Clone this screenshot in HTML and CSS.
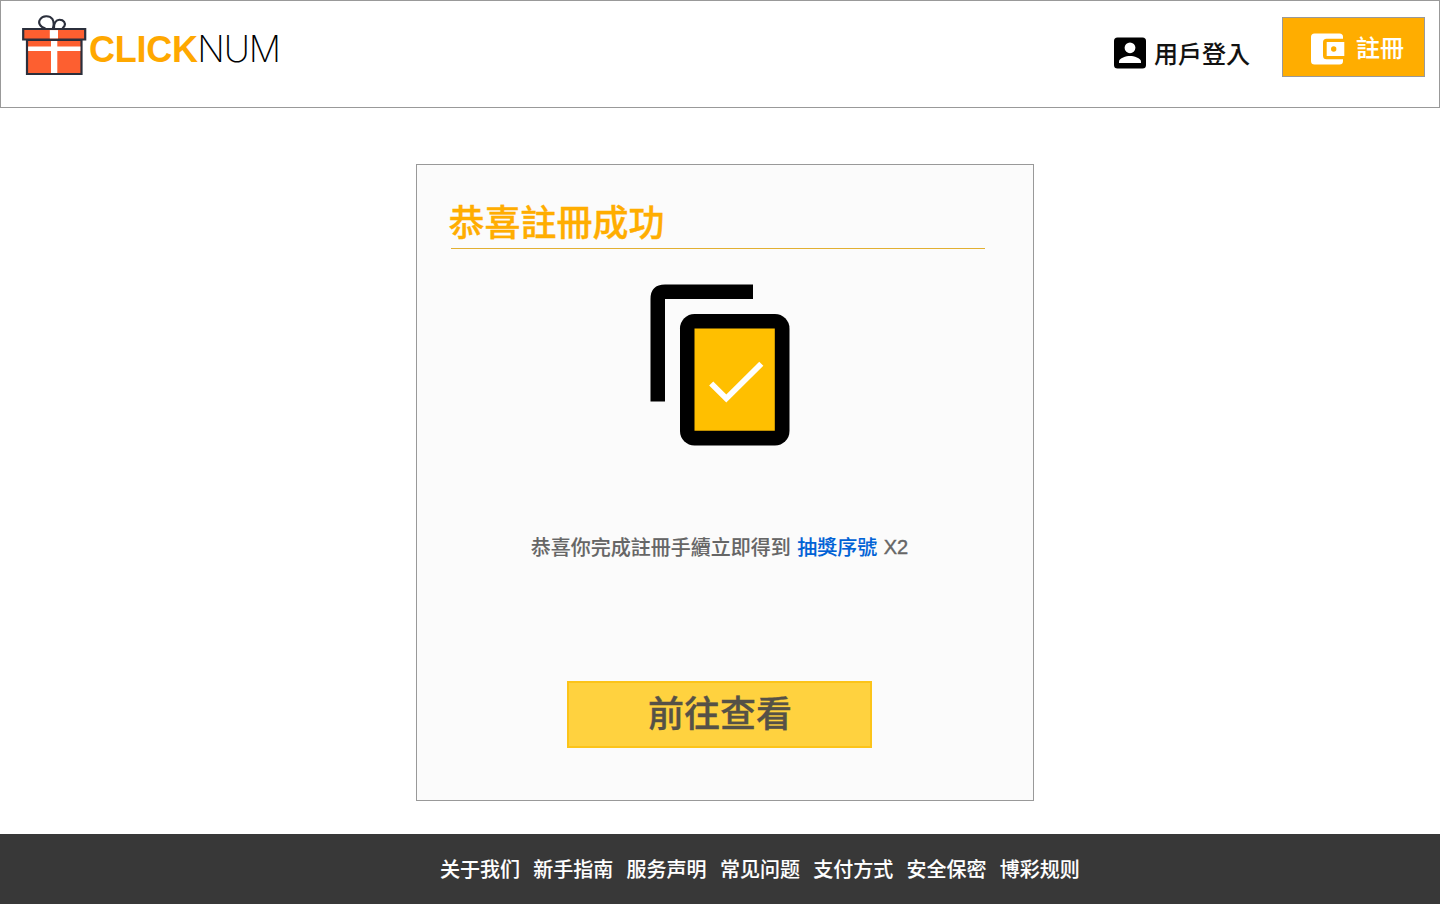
FILE: index.html
```html
<!DOCTYPE html>
<html lang="zh-Hant">
<head>
<meta charset="utf-8">
<title>CLICKNUM</title>
<link rel="stylesheet" href="styles.css">
</head>
<body>
<header class="header">
  <a class="logo">
    <svg class="logo-gift" width="66" height="64" viewBox="0.5 0 66 64">
      <g fill="none" stroke="#2b2f3c" stroke-width="2.1">
        <path d="M24 14.5C18 13 16.5 8.500 18.500 5.500C21 1.500 28 1 31 5.200C32.500 8 32.500 11 31.300 14.500"/>
        <path d="M32.500 14.500C32 9 34.500 5.800 38 5.800C42.500 5.800 44.300 9 43 12L41 14.500"/>
      </g>
      <path fill="#fd5f30" stroke="#2b2f3c" stroke-width="2.2" d="M5.500 26h54.500v34H5.500z"/>
      <path fill="#fff" d="M6.600 32.500h52.300v4.600H6.600zM29.500 27.100h6.300v31.800h-6.300z"/>
      <path fill="#fd5f30" stroke="#2b2f3c" stroke-width="2.200" d="M1.700 15h62v10.500h-62z"/>
      <path fill="#fff" d="M28.300 16.100h8.200v8.300h-8.200z"/>
    </svg>
    <span class="logo-click">CLICK</span><span class="logo-num">NUM</span>
  </a>
  <nav class="account">
    <a class="login">
      <svg width="32" height="32" viewBox="0 0 32 32">
        <rect y="0.500" width="32" height="31" rx="3.500"/>
        <circle cx="16" cy="10.800" r="5.400" fill="#fff"/>
        <path fill="#fff" d="M5 26v-1.500c0-3.600 7.300-5.600 11-5.600s11 2 11 5.600V26z"/>
      </svg>
      <span>用戶登入</span>
    </a>
    <a class="register">
      <svg width="36" height="32" viewBox="0 0 36 32">
        <rect x="1" y="0.500" width="32" height="31" rx="3.500" fill="#fff"/>
        <rect x="13" y="5.700" width="26" height="20.600" rx="3.500" fill="#ffad00"/>
        <rect x="16.700" y="9" width="17.600" height="14" fill="#fff"/>
        <circle cx="23.700" cy="16" r="2.700" fill="#ffad00"/>
      </svg>
      <span>註冊</span>
    </a>
  </nav>
</header>
<main class="card">
  <h1 class="title">恭喜註冊成功</h1>
  <svg class="success" width="140" height="162" viewBox="0 0 140 162">
    <path d="M0.500 117.500V15Q0.500 0.500 15 0.500H103V15H15V117.500z"/>
    <rect x="30" y="30" width="109.500" height="131.500" rx="14.500"/>
    <path fill="#ffbf00" d="M44.500 44.500h80.300v102.200H44.500z"/>
    <path fill="none" stroke="#fff" stroke-width="5.800" d="M61.200 99.500L76.300 114.500L111.300 79.700"/>
  </svg>
  <p class="message">恭喜你完成註冊手續立即得到<a class="prize">抽獎序號</a><span class="count">X2</span></p>
  <a class="view">前往查看</a>
</main>
<footer class="footer" lang="zh-Hans">
  <a>关于我们</a><a>新手指南</a><a>服务声明</a><a>常见问题</a><a>支付方式</a><a>安全保密</a><a>博彩规则</a>
</footer>
</body>
</html>
```
FILE: styles.css
```css
* { box-sizing: border-box; }
body {
  margin: 0;
  background: #fff;
  color: #111;
  font-family: "Noto Sans CJK TC", "Noto Sans CJK SC", sans-serif;
  font-weight: 500;
  -webkit-text-stroke: 0.1px;
}
.header {
  display: flex;
  justify-content: space-between;
  align-items: flex-start;
  height: 108px;
  padding: 13px 14px 0 21px;
  border: 1px solid #999;
}
.logo {
  display: flex;
  font-size: 36px;
  line-height: 40px;
  -webkit-text-stroke: 0;
}
.logo-gift { margin-right: 1px; }
.logo-click {
  margin-top: 16px;
  color: #ffa800;
  font-family: "Liberation Sans", sans-serif;
  font-weight: 700;
  letter-spacing: -0.25px;
}
.logo-num {
  margin: 15px 0 0 -0.5px;
  color: #000;
  font-family: Inter, sans-serif;
  font-weight: 250;
  letter-spacing: -1.1px;
}
.account {
  display: flex;
  align-items: flex-start;
  gap: 33px;
  padding-top: 3px;
  font-size: 24px;
}
.login {
  display: flex;
  gap: 8px;
  margin-right: -1px;
  padding-top: 20px;
  line-height: 32px;
}
.register {
  display: flex;
  gap: 10px;
  width: 143px;
  height: 60px;
  padding: 15px 0 0 27px;
  border: 1px solid #999;
  background: #ffad00;
  color: #fff;
  line-height: 28px;
}
.card {
  display: flex;
  flex-direction: column;
  align-items: center;
  width: 618px;
  height: 637px;
  margin: 56px 0 33px 416px;
  padding: 31px 48px 0 34px;
  border: 1px solid #999;
  background: #fbfbfb;
}
.title {
  align-self: stretch;
  height: 53px;
  margin: 0;
  border-bottom: 1px solid #e2b032;
  color: #ffad00;
  font-size: 36px;
  font-weight: 500;
  line-height: 48px;
  text-indent: -2.5px;
  -webkit-text-stroke: 0.35px;
}
.success { margin: 35px 0 85px 4px; }
.message {
  display: flex;
  gap: 6.5px;
  margin: 0 0 118px 3px;
  color: #666;
  font-size: 20px;
  line-height: 32px;
}
.prize { color: #0062d6; }
.count { font-family: "Liberation Sans", sans-serif; -webkit-text-stroke: 0.4px; }
.view {
  width: 305px;
  height: 67px;
  margin-left: 3px;
  padding-left: 1px;
  border: 2px solid #fcc419;
  background: #ffd23f;
  color: #555147;
  font-size: 36px;
  line-height: 57px;
  text-align: center;
  -webkit-text-stroke: 0.35px;
}
.footer {
  display: flex;
  gap: 13.3px;
  height: 70px;
  padding: 19px 0 0 440px;
  background: #383838;
  color: #fff;
  font-family: "Noto Sans CJK SC", sans-serif;
  font-size: 20px;
  line-height: 32px;
}
```
